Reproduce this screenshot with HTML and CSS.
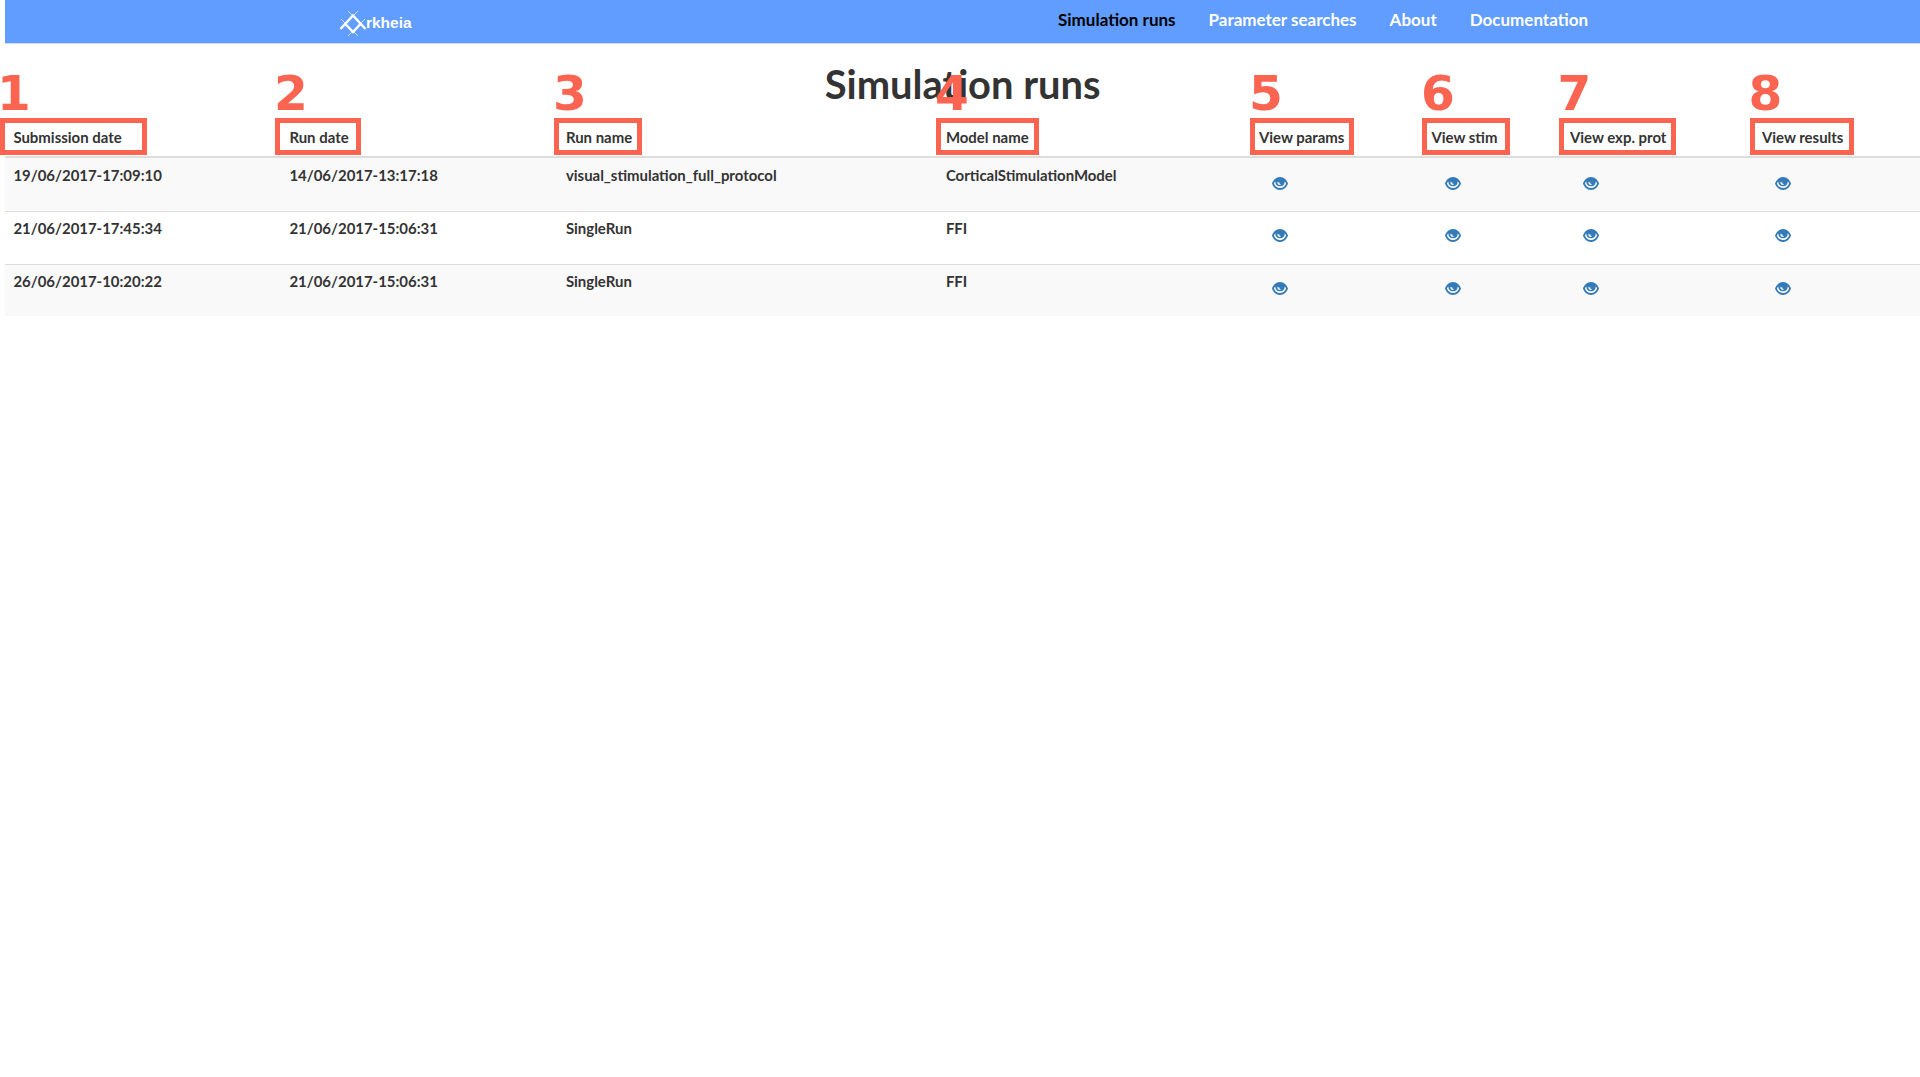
FILE: index.html
```html
<!DOCTYPE html>
<html lang="en">
<head>
<meta charset="utf-8">
<title>Arkheia - Simulation runs</title>
<link rel="stylesheet" href="styles.css">
</head>
<body>
<svg width="0" height="0" class="defs" aria-hidden="true">
  <symbol id="eye" viewBox="0 0 16 13">
    <path fill-rule="evenodd" d="M8 0C12 0 15 3.400 16 6.500C15 9.600 12 13 8 13C4 13 1 9.600 0 6.500C1 3.400 4 0 8 0ZM3.300 4.500C2.500 5.200 2.100 5.900 1.900 6.500C2.900 9.200 5 11.100 8 11.100C11 11.100 13.100 9.200 14.100 6.500C13.900 5.900 13.500 5.200 12.700 4.500C12.700 7.500 11 9.200 8 9.200C5 9.200 3.300 7.500 3.300 4.500ZM5.600 4.400C5 6.200 6 7.900 8 7.900C8.500 7.900 8.900 7.800 9.200 7.600C7.900 7.300 7.200 6.500 7.300 5.300C6.700 5.700 6.100 5.200 5.600 4.400Z"/>
  </symbol>
</svg>
<header class="navbar">
  <a class="brand">
    <svg class="logo" viewBox="0 0 28 28" fill="none" stroke="#fff">
      <path stroke-width="1" opacity=".65" d="M9 2L14 7L19 2M2 10L6 14M26 10L22 14M9 27L14 22L19 27"/>
      <path stroke-width="2.500" d="M1.500 20L14 6.500L26.500 20M6.500 15L14 23L21.500 15"/>
    </svg>
    <span>rkheia</span>
  </a>
  <nav class="links">
    <a class="active">Simulation runs</a>
    <a>Parameter searches</a>
    <a>About</a>
    <a>Documentation</a>
  </nav>
</header>
<main>
  <h1>Simulation runs</h1>
  <table class="runs">
    <colgroup><col class="c1"><col class="c2"><col class="c3"><col class="c4"><col class="c5"><col class="c6"><col class="c7"><col class="c8"></colgroup>
    <thead>
      <tr>
        <th>Submission date<b class="num n1">1</b><i class="box b1"></i></th>
        <th>Run date<b class="num n2">2</b><i class="box b2"></i></th>
        <th>Run name<b class="num n3">3</b><i class="box b3"></i></th>
        <th>Model name<b class="num n4">4</b><i class="box b4"></i></th>
        <th>View params<b class="num n5">5</b><i class="box b5"></i></th>
        <th>View stim<b class="num n6">6</b><i class="box b6"></i></th>
        <th>View exp. prot<b class="num n7">7</b><i class="box b7"></i></th>
        <th>View results<b class="num n8">8</b><i class="box b8"></i></th>
      </tr>
    </thead>
    <tbody>
      <tr><td>19/06/2017-17:09:10</td><td>14/06/2017-13:17:18</td><td>visual_stimulation_full_protocol</td><td>CorticalStimulationModel</td><td><svg class="eye"><use href="#eye"/></svg></td><td><svg class="eye"><use href="#eye"/></svg></td><td><svg class="eye"><use href="#eye"/></svg></td><td><svg class="eye"><use href="#eye"/></svg></td></tr>
      <tr><td>21/06/2017-17:45:34</td><td>21/06/2017-15:06:31</td><td>SingleRun</td><td>FFI</td><td><svg class="eye"><use href="#eye"/></svg></td><td><svg class="eye"><use href="#eye"/></svg></td><td><svg class="eye"><use href="#eye"/></svg></td><td><svg class="eye"><use href="#eye"/></svg></td></tr>
      <tr><td>26/06/2017-10:20:22</td><td>21/06/2017-15:06:31</td><td>SingleRun</td><td>FFI</td><td><svg class="eye"><use href="#eye"/></svg></td><td><svg class="eye"><use href="#eye"/></svg></td><td><svg class="eye"><use href="#eye"/></svg></td><td><svg class="eye"><use href="#eye"/></svg></td></tr>
    </tbody>
  </table>
</main>
</body>
</html>
```
FILE: styles.css
```css
* { box-sizing: border-box; }
body { margin: 0; padding-left: 5.400px; background: #fff; color: #333; font-family: Lato, "Liberation Sans", sans-serif; font-weight: 700; overflow: hidden; }
.defs { display: block; }
.navbar { height: 44px; background: #619cff; border-bottom: 1px solid #c9dcfb; display: flex; justify-content: space-between; padding: 0 332px 0 333.500px; color: #fff; }
.brand { display: flex; padding-top: 8.500px; font: 700 15.500px/27px "Liberation Sans", Arial, sans-serif; }
.brand span { margin-left: -1px; }
.logo { width: 28px; height: 28px; }
.links { display: flex; gap: 33px; padding-top: 9px; font-size: 17px; line-height: 22px; }
.active { color: #000; }
h1 { margin: 0; padding-top: 15px; height: 73px; text-align: center; font-size: 39.900px; line-height: 50px; font-weight: 700; }
.runs { width: 1914.600px; table-layout: fixed; border-collapse: separate; border-spacing: 0; font-size: 14.950px; line-height: 20px; }
.c1 { width: 276px; } .c2 { width: 276.500px; } .c3 { width: 380px; } .c4 { width: 313px; }
.c5 { width: 172.500px; } .c6 { width: 138.500px; } .c7 { width: 192px; }
th, td { padding: 7px 8px 8px; text-align: left; vertical-align: top; white-space: nowrap; }
th { position: relative; height: 41px; padding-top: 10px; border-bottom: 2px solid #ddd; }
td { height: 52.830px; }
tbody tr:nth-child(odd) td { background: #f9f9f9; }
tbody tr + tr td { border-top: 1px solid #ddd; }
tbody tr + tr td { padding-top: 6px; }
.eye { display: block; width: 16px; height: 13px; margin: 11.500px 0 0 13.600px; fill: #337ab7; }
.num { position: absolute; top: -48px; font: 700 48.600px/48px "DejaVu Sans", sans-serif; color: #fa6450; }
.n1 { left: -8.500px; } .n2 { left: -7.500px; } .n3 { left: -5px; } .n4 { left: -3px; }
.n5 { left: -2px; } .n6 { left: -2.500px; } .n7 { left: -4.500px; } .n8 { left: -5.500px; }
.box { position: absolute; top: 0.500px; height: 37px; border: 5px solid #fa6450; }
.b1 { left: -5.500px; width: 147px; }
.b2 { left: -6.500px; width: 86px; }
.b3 { left: -4px; width: 88px; }
.b4 { left: -2px; width: 103px; }
.b5 { left: -1px; width: 104px; }
.b6 { left: -1.500px; width: 88px; }
.b7 { left: -3px; width: 117px; }
.b8 { left: -4px; width: 104px; }
```
